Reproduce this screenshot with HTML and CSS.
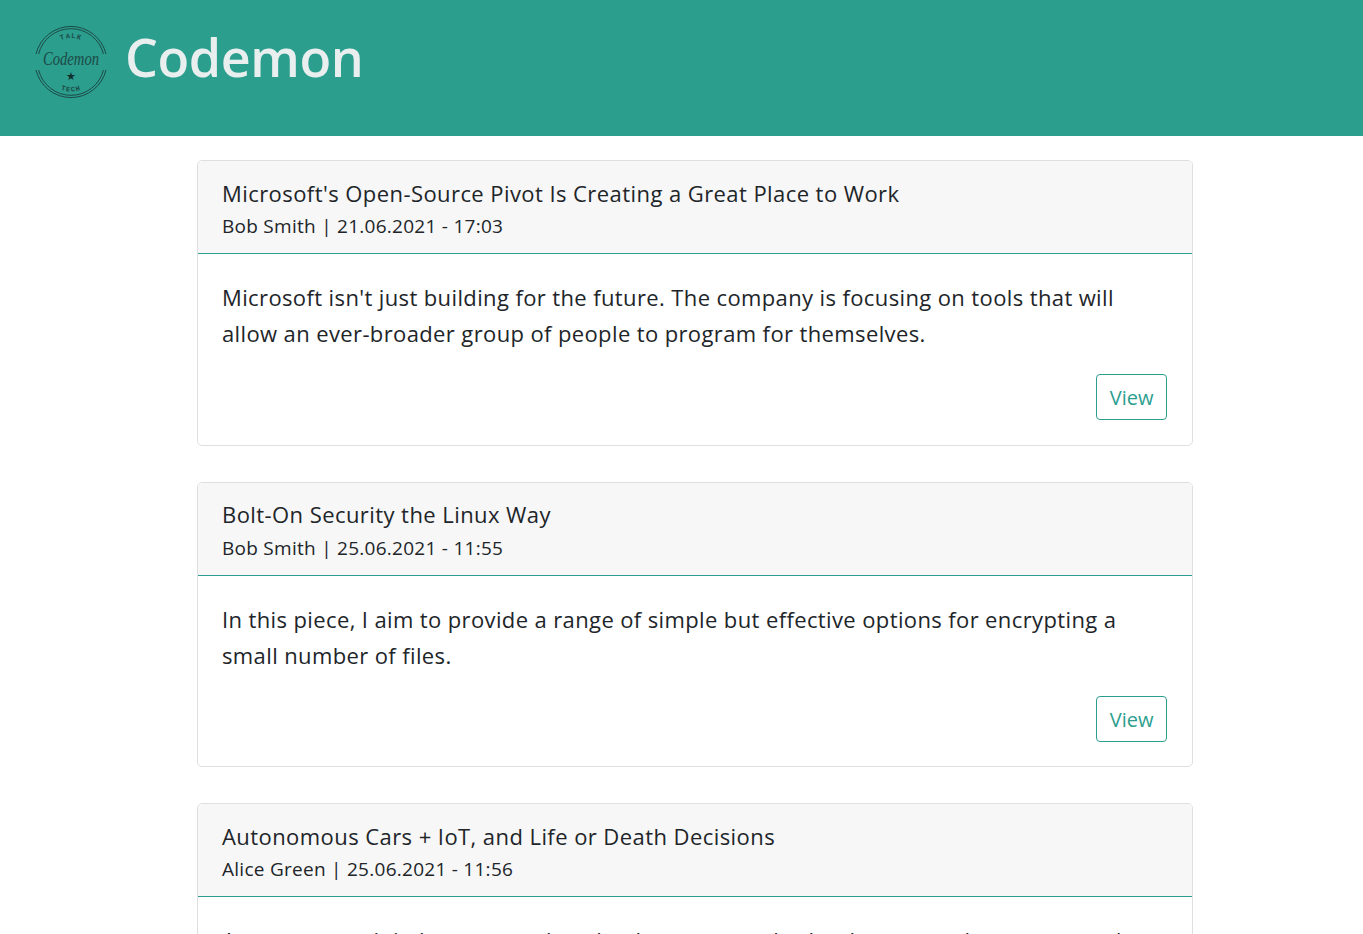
FILE: index.html
```html
<!DOCTYPE html>
<html lang="en">
<head>
<meta charset="utf-8">
<title>Codemon</title>
<link rel="stylesheet" href="styles.css">
</head>
<body>
<header class="site-header">
  <svg class="logo" viewBox="0 0 76 76" width="76" height="76" aria-hidden="true">
    <defs>
      <path id="arc-top" d="M14 38A24 24 0 0 1 62 38"/>
      <path id="arc-bottom" d="M8.5 38A29.5 29.5 0 0 0 67.5 38"/>
    </defs>
    <g fill="none" stroke="#1d4a46" stroke-width="1">
      <path d="M3 30A36 36 0 0 1 73 30"/>
      <path d="M5.6 30A33.4 33.4 0 0 1 70.4 30"/>
      <path d="M3 46A36 36 0 0 0 73 46"/>
      <path d="M5.6 46A33.4 33.4 0 0 0 70.4 46"/>
    </g>
    <text class="logo-small"><textPath href="#arc-top" startOffset="50%" text-anchor="middle">TALK</textPath></text>
    <text class="logo-small"><textPath href="#arc-bottom" startOffset="50%" text-anchor="middle">TECH</textPath></text>
    <text class="logo-script" x="38" y="41" text-anchor="middle" textLength="56" lengthAdjust="spacingAndGlyphs">Codemon</text>
    <text class="logo-star" x="38" y="56" text-anchor="middle">★</text>
  </svg>
  <h1 class="site-title">Codemon</h1>
</header>
<main class="post-list">
  <article class="card">
    <div class="card-head">
      <h2 class="card-title">Microsoft's Open-Source Pivot Is Creating a Great Place to Work</h2>
      <p class="card-meta">Bob Smith | 21.06.2021 - 17:03</p>
    </div>
    <div class="card-body">
      <p class="card-text">Microsoft isn't just building for the future. The company is focusing on tools that will allow an ever-broader group of people to program for themselves.</p>
      <div class="card-actions"><a class="btn" href="#">View</a></div>
    </div>
  </article>
  <article class="card">
    <div class="card-head">
      <h2 class="card-title">Bolt-On Security the Linux Way</h2>
      <p class="card-meta">Bob Smith | 25.06.2021 - 11:55</p>
    </div>
    <div class="card-body">
      <p class="card-text">In this piece, I aim to provide a range of simple but effective options for encrypting a small number of files.</p>
      <div class="card-actions"><a class="btn" href="#">View</a></div>
    </div>
  </article>
  <article class="card">
    <div class="card-head">
      <h2 class="card-title">Autonomous Cars + IoT, and Life or Death Decisions</h2>
      <p class="card-meta">Alice Green | 25.06.2021 - 11:56</p>
    </div>
    <div class="card-body">
      <p class="card-text">As computers join humans at the wheel, we must ask what happens when connected cars face a choice.</p>
      <div class="card-actions"><a class="btn" href="#">View</a></div>
    </div>
  </article>
</main>
</body>
</html>
```
FILE: styles.css
```css
html, body { margin: 0; padding: 0; }
html { height: 934px; overflow: hidden; }
body {
  height: 934px;
  overflow: hidden;
  font-family: "Open Sans", "Noto Sans", sans-serif;
  color: #212529;
  background: #fff;
}
.site-header {
  height: 136px;
  box-sizing: border-box;
  background: #2b9e8e;
  display: flex;
  align-items: flex-start;
  padding: 24px 0 0 33px;
}
.logo { flex: none; overflow: visible; }
.logo-small { font: 700 7px "Liberation Mono", monospace; letter-spacing: 1px; fill: #1d4a46; }
.logo-script { font: italic 400 19px "Liberation Serif", serif; fill: #1d4a46; }
.logo-star { font: 11px "DejaVu Sans", sans-serif; fill: #10302e; }
.site-title {
  margin: 0 0 0 16px;
  font-size: 52px;
  font-weight: 600;
  line-height: 66px;
  letter-spacing: -.45px;
  color: #e9eeee;
}
.post-list {
  width: 996px;
  margin: 24px 0 0 197px;
  display: flex;
  flex-direction: column;
  gap: 36px;
}
.card {
  border: 1px solid #dfdfdf;
  border-radius: 5px;
  overflow: hidden;
}
.card-head {
  background: #f7f7f7;
  border-bottom: 1px solid #2b9e8e;
  padding: 14.7px 24px 12px;
}
.card-title {
  margin: 0 0 1.3px;
  font-size: 22px;
  font-weight: 400;
  line-height: 34px;
  letter-spacing: .43px;
}
.card-meta {
  margin: 0;
  font-size: 19px;
  line-height: 30px;
  letter-spacing: .27px;
}
.card-body { padding: 25px 25px 24.6px 24px; }
.card-text {
  margin: 0 0 23px;
  font-size: 22px;
  line-height: 36px;
  letter-spacing: .38px;
}
.card-actions { display: flex; justify-content: flex-end; }
.btn {
  border: 1px solid #2b9e8e;
  border-radius: 4px;
  color: #2b9e8e;
  font-size: 20px;
  line-height: 43px;
  padding: 1px 12.5px 0;
  text-decoration: none;
}
```
